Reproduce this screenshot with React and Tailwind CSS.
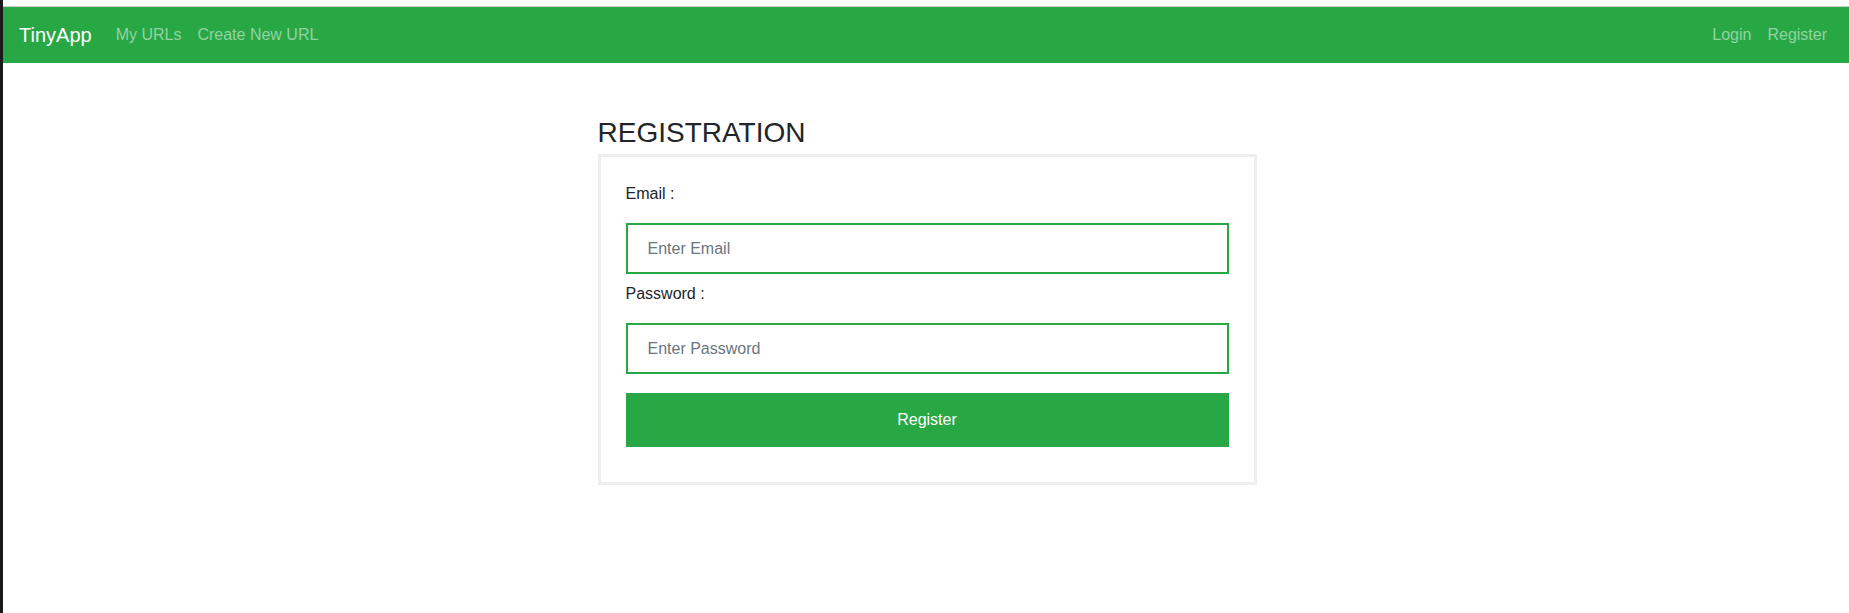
import React, { useState } from "react";

const App = () => {
    const [form, setForm] = useState({ email: "", password: "" });

    const handleChange = (e) => {
        setForm({ ...form, [e.target.name]: e.target.value });
    };

    return (
        <div className="flex min-h-[613px] bg-white font-['Liberation_Sans',Arial,sans-serif] text-[#212529]">
            {/* window edge */}
            <div className="w-[3px] shrink-0 bg-[#1a1a1a]"></div>

            <div className="flex flex-1 flex-col">
                <div className="h-[6px] bg-white"></div>
                <div className="h-px bg-[#cdcdcd]"></div>

                {/* Navbar */}
                <nav className="flex h-[56px] items-center bg-[#28a745] pl-4 pr-[14px]">
                    <a className="mr-4 text-[20px] leading-[30px] text-white">TinyApp</a>
                    <a className="px-2 text-[16px] leading-6 text-[#93d3a2]">My URLs</a>
                    <a className="px-2 text-[16px] leading-6 text-[#93d3a2]">Create New URL</a>
                    <div className="ml-auto flex">
                        <a className="px-2 text-[16px] leading-6 text-[#93d3a2]">Login</a>
                        <a className="px-2 text-[16px] leading-6 text-[#93d3a2]">Register</a>
                    </div>
                </nav>

                <div className="flex justify-center pl-[2px]">
                    <main className="mt-[53px] w-[659px]">
                        <h3 className="mb-[4px] text-[28px] leading-[34px]">REGISTRATION</h3>

                        <form className="border-[3px] border-[#eeeeee] px-[25px] pt-[25px] pb-[35px]">
                            <label className="mb-[17px] block text-[16px] leading-6">Email :</label>
                            <input
                                name="email"
                                type="email"
                                value={form.email}
                                onChange={handleChange}
                                placeholder="Enter Email"
                                className="mb-[8px] block h-[51px] w-full border-2 border-[#28a745] px-5 text-[16px] outline-none placeholder:text-[#6c757d]"
                            />
                            <label className="mb-[17px] block text-[16px] leading-6">Password :</label>
                            <input
                                name="password"
                                type="password"
                                value={form.password}
                                onChange={handleChange}
                                placeholder="Enter Password"
                                className="mb-[19px] block h-[51px] w-full border-2 border-[#28a745] px-5 text-[16px] outline-none placeholder:text-[#6c757d]"
                            />
                            <button
                                type="submit"
                                className="block h-[54px] w-full bg-[#28a745] text-[16px] text-white"
                            >
                                Register
                            </button>
                        </form>
                    </main>
                </div>
            </div>
        </div>
    );
};

export default App;
